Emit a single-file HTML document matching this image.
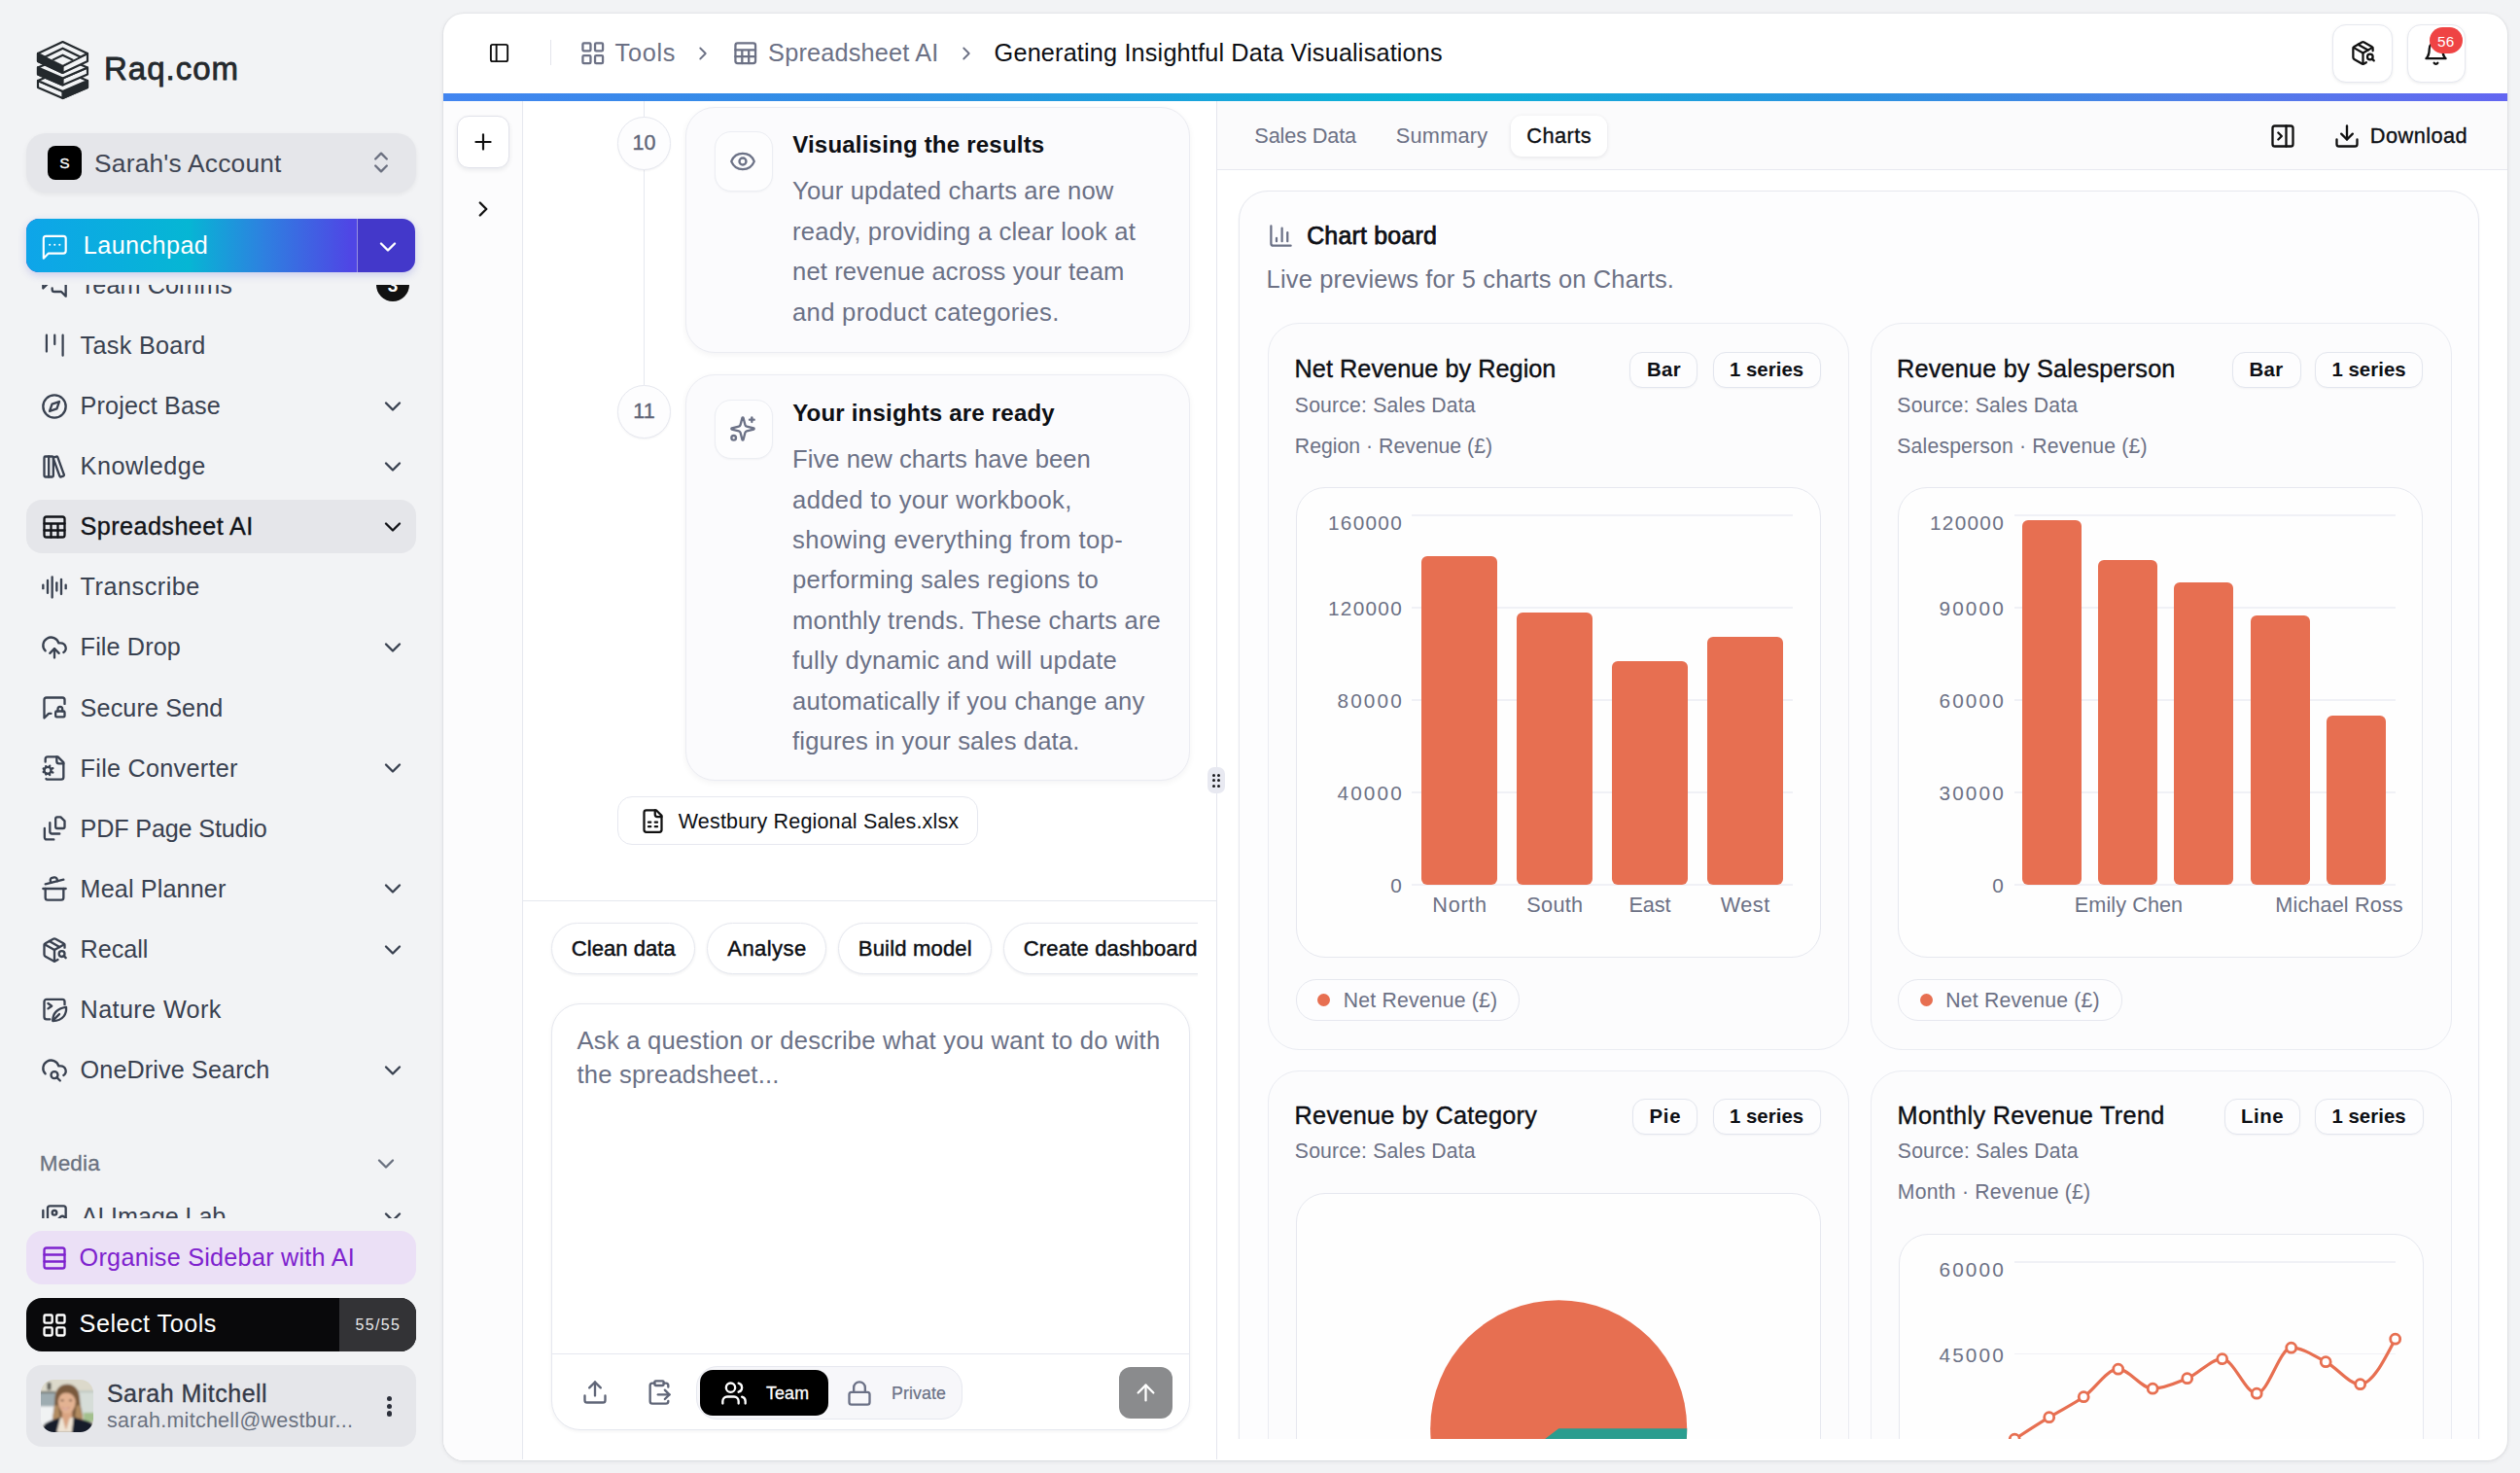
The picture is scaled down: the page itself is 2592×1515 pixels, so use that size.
<!DOCTYPE html>
<html lang="en"><head><meta charset="utf-8"><title>Raq.com - Spreadsheet AI</title>
<style>
*{box-sizing:border-box;margin:0;padding:0}
html,body{width:2592px;height:1515px;overflow:hidden;background:#f2f3f5;}
body{font-family:"Liberation Sans",sans-serif;position:relative;-webkit-font-smoothing:antialiased;}
div,span.t,svg.i{position:absolute}
span.t{white-space:nowrap;display:block}
svg.i{overflow:visible}
.clip{overflow:hidden}
</style></head>
<body>
<svg class="i" style="left:38px;top:42px" width="53" height="60" viewBox="0 0 53 60">
<g stroke="#24292d" stroke-width="2.2" stroke-linejoin="round" fill="#f2f3f5">
<path d="M1 48 L26.500 59 L52 48 L52 41 L26.500 52 L1 41 Z"/>
<path d="M26.500 52 L52 41 L52 48 L26.500 59 Z" fill="#24292d"/>
<path d="M1 41 L26.500 30 L52 41 L26.500 52 Z"/>
<path d="M1 34.500 L26.500 45.500 L52 34.500 L52 27.500 L26.500 38.500 L1 27.500 Z"/>
<path d="M1 27.500 L26.500 38.500 L26.500 45.500 L1 34.500 Z" fill="#24292d"/>
<path d="M1 27.500 L26.500 16.500 L52 27.500 L26.500 38.500 Z"/>
<path d="M1 21 L26.500 33 L52 21 L52 13 L26.500 25 L1 13 Z"/>
<path d="M1 13 L26.500 25 L26.500 33 L1 21 Z" fill="#24292d"/>
<path d="M1 13 L26.500 1 L52 13 L26.500 26 Z"/>
<clipPath id="lg"><path d="M2.500 13 L26.500 1.800 L50.500 13 L26.500 25 Z"/></clipPath>
<g clip-path="url(#lg)" stroke="none">
<path d="M4.400 17.200 L26.500 6.400 L48.600 17.200 L26.500 28 Z" fill="#24292d"/>
<path d="M9.500 17.200 L26.500 8.900 L43.500 17.200 L26.500 25.500 Z" fill="#f2f3f5"/>
<path d="M12.600 20.200 L26.500 13.400 L40.400 20.200 L26.500 27 Z" fill="#24292d"/>
<path d="M17.400 20.350 L26.500 15.900 L35.600 20.350 L26.500 24.800 Z" fill="#f2f3f5"/>
</g>
</g></svg>
<span class="t" style="top:50.0px;font-size:33.0px;line-height:42.9px;color:#24292d;-webkit-text-stroke:0.8px #24292d;left:106.98px;letter-spacing:0.995px;">Raq.com</span>
<div style="left:27px;top:137px;width:401px;height:61px;background:#e5e6ea;border-radius:20px;box-shadow:0 2px 5px rgba(0,0,0,.06)"></div>
<div style="left:49px;top:150px;width:35px;height:35px;background:#000;border-radius:8px"></div>
<span class="t" style="top:158.01px;font-size:15.5px;line-height:20.15px;color:#fff;-webkit-text-stroke:0.3px #fff;left:66.5px;transform:translateX(-50%);">S</span>
<span class="t" style="top:151.01px;font-size:26.32px;line-height:34.22px;color:#3f4553;left:97.05px;letter-spacing:0.216px;">Sarah's Account</span>
<svg class="i" style="left:377.5px;top:153.0px;" width="28" height="28" viewBox="0 0 24 24" fill="none" stroke="#6b7080" stroke-width="2" stroke-linecap="round" stroke-linejoin="round"><path d="m7 15 5 5 5-5"/><path d="m7 9 5-5 5 5"/></svg>
<div style="left:27px;top:225px;width:400.2px;height:55px;border-radius:13px;background:#4338ca;box-shadow:0 3px 8px rgba(60,70,200,.22);overflow:hidden"><div style="left:0;top:0;width:340px;height:55px;background:linear-gradient(90deg,#0ea5e9 0%,#06b6d4 49%,#2e80e0 72%,#4f46e5 98%)"></div><div style="left:339.500px;top:0;width:1.500px;height:55px;background:rgba(255,255,255,.45)"></div></div>
<svg class="i" style="left:40.55px;top:239.05px;" width="30.5" height="30.5" viewBox="0 0 24 24" fill="none" stroke="#fff" stroke-width="1.7" stroke-linecap="round" stroke-linejoin="round"><path d="M21 15a2 2 0 0 1-2 2H7l-4 4V5a2 2 0 0 1 2-2h14a2 2 0 0 1 2 2z"/><path d="M8 10h.01"/><path d="M12 10h.01"/><path d="M16 10h.01"/></svg>
<span class="t" style="top:236.01px;font-size:25.21px;line-height:32.77px;color:#fff;left:85.81px;letter-spacing:0.414px;">Launchpad</span>
<svg class="i" style="left:385.2px;top:239.5px;" width="28" height="28" viewBox="0 0 24 24" fill="none" stroke="#fff" stroke-width="2" stroke-linecap="round" stroke-linejoin="round"><path d="m6 9 6 6 6-6"/></svg>
<div class="clip" style="left:0;top:293.300px;width:456px;height:959.700px">
<svg class="i" style="left:42.4px;top:-14.0px;" width="28" height="28" viewBox="0 0 24 24" fill="none" stroke="#394150" stroke-width="2" stroke-linecap="round" stroke-linejoin="round"><path d="M14 9a2 2 0 0 1-2 2H6l-4 4V4a2 2 0 0 1 2-2h8a2 2 0 0 1 2 2z"/><path d="M18 9h2a2 2 0 0 1 2 2v11l-4-4h-6a2 2 0 0 1-2-2v-1"/></svg>
<span class="t" style="top:-16.3px;font-size:25.21px;line-height:32.77px;color:#394150;left:82.61px;letter-spacing:0.089px;">Team Comms</span>
<div style="left:387px;top:-17.3px;width:34px;height:34px;background:#111;border-radius:50%"></div>
<span class="t" style="top:-11.31px;font-size:19.0px;line-height:24.7px;color:#fff;font-weight:700;left:404px;transform:translateX(-50%);">3</span>
<svg class="i" style="left:42px;top:48.02px" width="28" height="28" viewBox="0 0 28 28" fill="none" stroke="#394150" stroke-width="2.250" stroke-linecap="round"><path d="M5.900 3.700V20.600M14.250 3.700V13M22.600 3.700V24.700"/></svg>
<span class="t" style="top:45.71px;font-size:25.21px;line-height:32.77px;color:#394150;left:82.61px;letter-spacing:0.297px;">Task Board</span>
<svg class="i" style="left:42.4px;top:110.24px;" width="28" height="28" viewBox="0 0 24 24" fill="none" stroke="#394150" stroke-width="2" stroke-linecap="round" stroke-linejoin="round"><circle cx="12" cy="12" r="10"/><polygon points="16.24 7.76 14.12 14.12 7.76 16.24 9.88 9.88 16.24 7.76"/></svg>
<span class="t" style="top:107.71px;font-size:25.21px;line-height:32.77px;color:#394150;left:82.61px;letter-spacing:0.122px;">Project Base</span>
<svg class="i" style="left:390.3px;top:110.24px;" width="28" height="28" viewBox="0 0 24 24" fill="none" stroke="#394150" stroke-width="2" stroke-linecap="round" stroke-linejoin="round"><path d="m6 9 6 6 6-6"/></svg>
<svg class="i" style="left:42.4px;top:172.36px;" width="28" height="28" viewBox="0 0 24 24" fill="none" stroke="#394150" stroke-width="2" stroke-linecap="round" stroke-linejoin="round"><rect width="8" height="18" x="3" y="3" rx="1"/><path d="M7 3v18"/><path d="M20.4 18.9c.2.5-.1 1.1-.6 1.3l-1.9.7c-.5.2-1.1-.1-1.3-.6L11.1 5.1c-.2-.5.1-1.1.6-1.3l1.9-.7c.5-.2 1.1.1 1.3.6Z"/></svg>
<span class="t" style="top:169.71px;font-size:25.21px;line-height:32.77px;color:#394150;left:82.61px;letter-spacing:0.503px;">Knowledge</span>
<svg class="i" style="left:390.3px;top:172.36px;" width="28" height="28" viewBox="0 0 24 24" fill="none" stroke="#394150" stroke-width="2" stroke-linecap="round" stroke-linejoin="round"><path d="m6 9 6 6 6-6"/></svg>
<div style="left:27px;top:220.7px;width:401px;height:55px;background:#e5e6ea;border-radius:16px"></div>
<svg class="i" style="left:42.4px;top:234.48px;" width="28" height="28" viewBox="0 0 24 24" fill="none" stroke="#111318" stroke-width="2" stroke-linecap="round" stroke-linejoin="round"><rect width="18" height="18" x="3" y="3" rx="2"/><path d="M3 9h18M3 15h18M9 9v12M15 9v12"/></svg>
<span class="t" style="top:231.71px;font-size:25.21px;line-height:32.77px;color:#111318;-webkit-text-stroke:0.35px #111318;left:82.61px;letter-spacing:0.414px;">Spreadsheet AI</span>
<svg class="i" style="left:390.3px;top:234.48px;" width="28" height="28" viewBox="0 0 24 24" fill="none" stroke="#111318" stroke-width="2" stroke-linecap="round" stroke-linejoin="round"><path d="m6 9 6 6 6-6"/></svg>
<svg class="i" style="left:42.4px;top:296.6px;" width="28" height="28" viewBox="0 0 24 24" fill="none" stroke="#394150" stroke-width="2" stroke-linecap="round" stroke-linejoin="round"><path d="M2 10v3"/><path d="M6 6v11"/><path d="M10 3v18"/><path d="M14 8v7"/><path d="M18 5v13"/><path d="M22 10v3"/></svg>
<span class="t" style="top:293.71px;font-size:25.21px;line-height:32.77px;color:#394150;left:82.61px;letter-spacing:0.514px;">Transcribe</span>
<svg class="i" style="left:42.4px;top:358.72px;" width="28" height="28" viewBox="0 0 24 24" fill="none" stroke="#394150" stroke-width="2" stroke-linecap="round" stroke-linejoin="round"><path d="M12 13v8"/><path d="M4 14.899A7 7 0 1 1 15.71 8h1.79a4.5 4.5 0 0 1 2.5 8.242"/><path d="m8 17 4-4 4 4"/></svg>
<span class="t" style="top:355.71px;font-size:25.21px;line-height:32.77px;color:#394150;left:82.61px;letter-spacing:0.126px;">File Drop</span>
<svg class="i" style="left:390.3px;top:358.72px;" width="28" height="28" viewBox="0 0 24 24" fill="none" stroke="#394150" stroke-width="2" stroke-linecap="round" stroke-linejoin="round"><path d="m6 9 6 6 6-6"/></svg>
<svg class="i" style="left:42.4px;top:420.84px;" width="28" height="28" viewBox="0 0 24 24" fill="none" stroke="#394150" stroke-width="2" stroke-linecap="round" stroke-linejoin="round"><path d="M19 15v-2a2 2 0 1 0-4 0v2"/><path d="M9 17H7l-4 4V5a2 2 0 0 1 2-2h14a2 2 0 0 1 2 2v3.5"/><rect x="13" y="15" width="8" height="5" rx="1"/></svg>
<span class="t" style="top:418.71px;font-size:25.21px;line-height:32.77px;color:#394150;left:82.61px;letter-spacing:0.102px;">Secure Send</span>
<svg class="i" style="left:42.4px;top:482.96px;" width="28" height="28" viewBox="0 0 24 24" fill="none" stroke="#394150" stroke-width="2" stroke-linecap="round" stroke-linejoin="round"><path d="M14 2v4a2 2 0 0 0 2 2h4"/><path d="m3.2 12.9-.9-.4"/><path d="m3.2 15.1-.9.4"/><path d="M4.677 21.5a2 2 0 0 0 1.313.5H18a2 2 0 0 0 2-2V7l-5-5H6a2 2 0 0 0-2 2v2.5"/><path d="m4.9 11.3-.4-.9"/><path d="m4.9 16.7-.4.9"/><path d="m7.5 10.9.4-.9"/><path d="m7.5 17.1.4.9"/><path d="m9.7 12.5.9-.4"/><path d="m9.7 15.5.9.4"/><circle cx="6" cy="14" r="3"/></svg>
<span class="t" style="top:480.72px;font-size:25.21px;line-height:32.77px;color:#394150;left:82.61px;letter-spacing:0.267px;">File Converter</span>
<svg class="i" style="left:390.3px;top:482.96px;" width="28" height="28" viewBox="0 0 24 24" fill="none" stroke="#394150" stroke-width="2" stroke-linecap="round" stroke-linejoin="round"><path d="m6 9 6 6 6-6"/></svg>
<svg class="i" style="left:42.4px;top:545.08px;" width="28" height="28" viewBox="0 0 24 24" fill="none" stroke="#394150" stroke-width="2" stroke-linecap="round" stroke-linejoin="round"><path d="M13 3.500a1.500 1.500 0 0 1 1.500-1.500h3l3.500 3.500v5a1.500 1.500 0 0 1-1.500 1.500h-5a1.500 1.500 0 0 1-1.500-1.500z"/><path d="M8 7v8a1.700 1.700 0 0 0 1.700 1.700h6.800"/><path d="M3.300 12v8a1.800 1.800 0 0 0 1.800 1.800h6.300"/></svg>
<span class="t" style="top:542.73px;font-size:25.21px;line-height:32.77px;color:#394150;left:82.61px;letter-spacing:-0.179px;">PDF Page Studio</span>
<svg class="i" style="left:42.4px;top:607.2px;" width="28" height="28" viewBox="0 0 24 24" fill="none" stroke="#394150" stroke-width="2" stroke-linecap="round" stroke-linejoin="round"><path d="M2 12h20"/><path d="M20 12v8a2 2 0 0 1-2 2H6a2 2 0 0 1-2-2v-8"/><path d="m4 8 16-4"/><path d="m8.86 6.78-.45-1.81a2 2 0 0 1 1.45-2.43l1.94-.48a2 2 0 0 1 2.43 1.46l.45 1.8"/></svg>
<span class="t" style="top:604.71px;font-size:25.21px;line-height:32.77px;color:#394150;left:82.61px;letter-spacing:0.112px;">Meal Planner</span>
<svg class="i" style="left:390.3px;top:607.2px;" width="28" height="28" viewBox="0 0 24 24" fill="none" stroke="#394150" stroke-width="2" stroke-linecap="round" stroke-linejoin="round"><path d="m6 9 6 6 6-6"/></svg>
<svg class="i" style="left:42.4px;top:669.32px;" width="28" height="28" viewBox="0 0 24 24" fill="none" stroke="#394150" stroke-width="2" stroke-linecap="round" stroke-linejoin="round"><path d="M21 10V8a2 2 0 0 0-1-1.73l-7-4a2 2 0 0 0-2 0l-7 4A2 2 0 0 0 3 8v8a2 2 0 0 0 1 1.73l7 4a2 2 0 0 0 2 0l2-1.14"/><path d="m7.5 4.27 9 5.15"/><polyline points="3.29 7 12 12 20.71 7"/><line x1="12" x2="12" y1="22" y2="12"/><circle cx="18.5" cy="15.5" r="2.5"/><path d="M20.27 17.27 22 19"/></svg>
<span class="t" style="top:666.72px;font-size:25.21px;line-height:32.77px;color:#394150;left:82.61px;letter-spacing:-0.058px;">Recall</span>
<svg class="i" style="left:390.3px;top:669.32px;" width="28" height="28" viewBox="0 0 24 24" fill="none" stroke="#394150" stroke-width="2" stroke-linecap="round" stroke-linejoin="round"><path d="m6 9 6 6 6-6"/></svg>
<svg class="i" style="left:42.4px;top:731.44px;" width="28" height="28" viewBox="0 0 24 24" fill="none" stroke="#394150" stroke-width="2" stroke-linecap="round" stroke-linejoin="round"><path d="M21 7V4.500a2 2 0 0 0-2-2H5a2 2 0 0 0-2 2V18a2 2 0 0 0 2 2h3"/><path d="m6.400 6 3.200 2.300-3.200 2.300"/><path d="M10.500 21.500C10.500 15.500 14 10.500 22.300 9.300 22.800 15 20 21.300 10.500 21.500Z"/><path d="M10.900 20.900 16.300 15.500"/></svg>
<span class="t" style="top:728.71px;font-size:25.21px;line-height:32.77px;color:#394150;left:82.61px;letter-spacing:0.375px;">Nature Work</span>
<svg class="i" style="left:42.4px;top:793.56px;" width="28" height="28" viewBox="0 0 24 24" fill="none" stroke="#394150" stroke-width="2" stroke-linecap="round" stroke-linejoin="round"><path d="M4 14.899A7 7 0 1 1 15.710 8h1.790a4.500 4.500 0 0 1 2.500 8.242"/><circle cx="12" cy="16" r="3"/><path d="m14.100 18.100 2.900 2.900"/></svg>
<span class="t" style="top:790.71px;font-size:25.21px;line-height:32.77px;color:#394150;left:82.61px;letter-spacing:0.102px;">OneDrive Search</span>
<svg class="i" style="left:390.3px;top:793.56px;" width="28" height="28" viewBox="0 0 24 24" fill="none" stroke="#394150" stroke-width="2" stroke-linecap="round" stroke-linejoin="round"><path d="m6 9 6 6 6-6"/></svg>
<span class="t" style="top:888.7px;font-size:22.5px;line-height:29.25px;color:#6b7280;-webkit-text-stroke:0.3px #6b7280;left:40.76px;letter-spacing:0.17px;">Media</span>
<svg class="i" style="left:383.0px;top:889.7px;" width="28" height="28" viewBox="0 0 24 24" fill="none" stroke="#6b7280" stroke-width="2" stroke-linecap="round" stroke-linejoin="round"><path d="m6 9 6 6 6-6"/></svg>
<svg class="i" style="left:42.4px;top:944.9px;" width="28" height="28" viewBox="0 0 24 24" fill="none" stroke="#394150" stroke-width="2" stroke-linecap="round" stroke-linejoin="round"><path d="M18 22H4a2 2 0 0 1-2-2V6"/><path d="m22 13-1.296-1.296a2.410 2.410 0 0 0-3.408 0L11 18"/><circle cx="12" cy="8" r="2"/><rect width="16" height="16" x="6" y="2" rx="2"/></svg>
<span class="t" style="top:941.71px;font-size:25.21px;line-height:32.77px;color:#394150;left:83.61px;letter-spacing:-0.107px;">AI Image Lab</span>
<svg class="i" style="left:390.3px;top:944.9px;" width="28" height="28" viewBox="0 0 24 24" fill="none" stroke="#394150" stroke-width="2" stroke-linecap="round" stroke-linejoin="round"><path d="m6 9 6 6 6-6"/></svg>
</div>
<div style="left:27px;top:1266px;width:400.5px;height:55px;background:#ebe0f6;border-radius:16px"></div>
<svg class="i" style="left:41.5px;top:1280.0px;" width="28" height="28" viewBox="0 0 24 24" fill="none" stroke="#7e22ce" stroke-width="2" stroke-linecap="round" stroke-linejoin="round"><rect width="18" height="18" x="3" y="3" rx="2"/><path d="M21 9H3"/><path d="M21 15H3"/></svg>
<span class="t" style="top:1277.01px;font-size:25.21px;line-height:32.77px;color:#7e22ce;left:81.61px;letter-spacing:0.253px;">Organise Sidebar with AI</span>
<div style="left:27px;top:1335px;width:400.5px;height:55px;background:#09090b;border-radius:16px;overflow:hidden"><div style="left:322px;top:0;width:79px;height:55px;background:#333336"></div></div>
<svg class="i" style="left:41.5px;top:1348.5px;" width="28" height="28" viewBox="0 0 24 24" fill="none" stroke="#fff" stroke-width="2" stroke-linecap="round" stroke-linejoin="round"><rect width="7" height="7" x="3" y="3" rx="1"/><rect width="7" height="7" x="14" y="3" rx="1"/><rect width="7" height="7" x="14" y="14" rx="1"/><rect width="7" height="7" x="3" y="14" rx="1"/></svg>
<span class="t" style="top:1345.01px;font-size:25.21px;line-height:32.77px;color:#fff;left:81.61px;letter-spacing:0.483px;">Select Tools</span>
<span class="t" style="top:1353.0px;font-size:16.0px;line-height:20.8px;color:#e8e8ea;left:365.62px;letter-spacing:1.303px;">55/55</span>
<div style="left:27px;top:1404px;width:400.5px;height:83.5px;background:#e5e6ea;border-radius:16px"></div>
<svg class="i" style="left:42px;top:1419px" width="54" height="54" viewBox="0 0 54 54">
<defs><clipPath id="av"><rect width="54" height="54" rx="13.500"/></clipPath>
<filter id="avb" x="-10%" y="-10%" width="120%" height="120%"><feGaussianBlur stdDeviation="1"/></filter></defs>
<g clip-path="url(#av)"><g filter="url(#avb)">
<rect x="-2" y="-2" width="58" height="58" fill="#dcd9cb"/>
<rect x="-2" y="13.800" width="17" height="14" fill="#9eacb1"/>
<rect x="-2" y="12" width="17" height="1.800" fill="#5e6460"/>
<rect x="6.500" y="2.800" width="4" height="8" rx="1.500" fill="#5a5a52"/>
<rect x="-2" y="27.500" width="16" height="20" fill="#f0f2f3"/>
<rect x="38" y="11.500" width="18" height="25" fill="#d6ddd8"/>
<rect x="38" y="11.500" width="18" height="1.600" fill="#b9c2bb"/>
<rect x="44" y="34" width="12" height="9" fill="#a3c08d"/>
<path d="M27.200 4.800C18 4.800 14.500 12 14.300 21 14 30 12 36 12.500 41L43 41C43.500 35 40.500 29 40.200 21 40 12 36 4.800 27.200 4.800Z" fill="#7a5a3c"/>
<path d="M14.300 26C14 32 12 37 12.500 41L20 41 18 27ZM40.200 26C40.500 32 43.500 37 43 41L35 41 36.500 27Z" fill="#b18b60"/>
<rect x="21.700" y="32" width="10.600" height="10" fill="#d9a482"/>
<ellipse cx="26.800" cy="22.800" rx="9" ry="12" fill="#e3b292"/>
<path d="M17.800 21C18 13 22 10.200 27 10.200 32.500 10.200 35.800 13.500 35.800 21 34 16.500 31 13.500 26 13.600 21.500 13.800 19 16.500 17.800 21Z" fill="#7a5a3c"/>
<ellipse cx="22" cy="21.300" rx="1.700" ry="0.900" fill="#5d4434"/><ellipse cx="30.600" cy="21.300" rx="1.700" ry="0.900" fill="#5d4434"/>
<path d="M21.500 28.800Q25.500 32.500 29.500 28.800Q25.500 30 21.500 28.800Z" fill="#fff" stroke="#c4766a" stroke-width="0.600"/>
<path d="M4 45.500C9 42 15 40.500 20 39L27 47 33.700 38.800C40 40.500 47 42 52.800 44.500L56 56-2 56Z" fill="#151b2c"/>
<path d="M20 39 16.200 54.500 32 54.500 33.700 38.800 29.500 39.500 26 50 22.500 39.500Z" fill="#efe4d4"/>
<path d="M22.500 39.500 25.800 52 29.500 39.500Z" fill="#d9a482"/>
</g></g></svg>
<span class="t" style="top:1417.0px;font-size:25.0px;line-height:32.5px;color:#353b49;-webkit-text-stroke:0.35px #353b49;left:109.92px;letter-spacing:0.488px;">Sarah Mitchell</span>
<span class="t" style="top:1448.01px;font-size:21.5px;line-height:27.95px;color:#6b7280;left:110.12px;letter-spacing:0.262px;">sarah.mitchell@westbur...</span>
<div style="left:398.3px;top:1436.1000000000001px;width:5.2px;height:5.2px;background:#2b2f3a;border-radius:50%"></div>
<div style="left:398.3px;top:1443.7px;width:5.2px;height:5.2px;background:#2b2f3a;border-radius:50%"></div>
<div style="left:398.3px;top:1451.4px;width:5.2px;height:5.2px;background:#2b2f3a;border-radius:50%"></div>
<div style="left:456px;top:13.5px;width:2122.7px;height:1488.3px;background:#fff;border-radius:21px;box-shadow:0 1px 4px rgba(15,23,42,.10),0 0 0 1px rgba(15,23,42,.03)"></div>
<svg class="i" style="left:502.0px;top:43.3px;" width="23" height="23" viewBox="0 0 24 24" fill="none" stroke="#111" stroke-width="2" stroke-linecap="round" stroke-linejoin="round"><rect width="18" height="18" x="3" y="3" rx="2"/><path d="M9 3v18"/></svg>
<div style="left:565.5px;top:41px;width:1.5px;height:26px;background:#e3e5ec"></div>
<svg class="i" style="left:595.55px;top:40.55px;" width="27.5" height="27.5" viewBox="0 0 24 24" fill="none" stroke="#6c7185" stroke-width="2" stroke-linecap="round" stroke-linejoin="round"><rect width="7" height="7" x="3" y="3" rx="1"/><rect width="7" height="7" x="14" y="3" rx="1"/><rect width="7" height="7" x="14" y="14" rx="1"/><rect width="7" height="7" x="3" y="14" rx="1"/></svg>
<span class="t" style="top:38.01px;font-size:25.29px;line-height:32.88px;color:#6c7185;left:632.61px;letter-spacing:0.681px;">Tools</span>
<svg class="i" style="left:711.5px;top:43.5px;" width="22" height="22" viewBox="0 0 24 24" fill="none" stroke="#6c7185" stroke-width="2" stroke-linecap="round" stroke-linejoin="round"><path d="m9 18 6-6-6-6"/></svg>
<svg class="i" style="left:753.05px;top:40.55px;" width="27.5" height="27.5" viewBox="0 0 24 24" fill="none" stroke="#6c7185" stroke-width="2" stroke-linecap="round" stroke-linejoin="round"><rect width="18" height="18" x="3" y="3" rx="2"/><path d="M3 9h18M3 15h18M9 9v12M15 9v12"/></svg>
<span class="t" style="top:38.01px;font-size:25.29px;line-height:32.88px;color:#6c7185;left:790.11px;letter-spacing:0.177px;">Spreadsheet AI</span>
<svg class="i" style="left:983.0px;top:43.5px;" width="22" height="22" viewBox="0 0 24 24" fill="none" stroke="#6c7185" stroke-width="2" stroke-linecap="round" stroke-linejoin="round"><path d="m9 18 6-6-6-6"/></svg>
<span class="t" style="top:38.01px;font-size:25.29px;line-height:32.88px;color:#0d0f14;left:1022.61px;letter-spacing:0.155px;">Generating Insightful Data Visualisations</span>
<div style="left:2399px;top:24.7px;width:62px;height:60px;background:#fff;border:1.500px solid #e6e8ef;border-radius:14px;box-shadow:0 1px 3px rgba(15,23,42,.08)"></div>
<svg class="i" style="left:2416.5px;top:41.0px;" width="27" height="27" viewBox="0 0 24 24" fill="none" stroke="#111" stroke-width="2" stroke-linecap="round" stroke-linejoin="round"><path d="M21 10V8a2 2 0 0 0-1-1.73l-7-4a2 2 0 0 0-2 0l-7 4A2 2 0 0 0 3 8v8a2 2 0 0 0 1 1.73l7 4a2 2 0 0 0 2 0l2-1.14"/><path d="m7.5 4.27 9 5.15"/><polyline points="3.29 7 12 12 20.71 7"/><line x1="12" x2="12" y1="22" y2="12"/><circle cx="18.5" cy="15.5" r="2.5"/><path d="M20.27 17.27 22 19"/></svg>
<div style="left:2476px;top:24.7px;width:60px;height:60px;background:#fff;border:1.500px solid #e6e8ef;border-radius:14px;box-shadow:0 1px 3px rgba(15,23,42,.08)"></div>
<svg class="i" style="left:2491.5px;top:41.0px;" width="27" height="27" viewBox="0 0 24 24" fill="none" stroke="#111" stroke-width="2" stroke-linecap="round" stroke-linejoin="round"><path d="M6 8a6 6 0 0 1 12 0c0 7 3 9 3 9H3s3-2 3-9"/><path d="M10.3 21a1.94 1.94 0 0 0 3.4 0"/></svg>
<div style="left:2499px;top:28.3px;width:33.5px;height:27px;background:#ef4444;border-radius:14px"></div>
<span class="t" style="top:33.01px;font-size:15.3px;line-height:19.89px;color:#fff;left:2515.8px;transform:translateX(-50%);letter-spacing:.3px;">56</span>
<div style="left:456px;top:96px;width:2122.7px;height:7.5px;background:linear-gradient(90deg,#4285f0 0%,#2d8fe3 22%,#0ab3d6 47%,#2a92e0 68%,#4f7fe8 85%,#6366f1 100%)"></div>
<div style="left:456px;top:103.5px;width:81px;height:1398.3px;background:#fcfcfd;border-bottom-left-radius:21px"></div>
<div style="left:536.5px;top:103.5px;width:1.5px;height:1397.5px;background:#e6e8ef"></div>
<div style="left:470px;top:119px;width:54px;height:54px;background:#fff;border:1.500px solid #e1e2ea;border-radius:12px;box-shadow:0 2px 5px rgba(15,23,42,.08)"></div>
<svg class="i" style="left:484.0px;top:133.0px;" width="26" height="26" viewBox="0 0 24 24" fill="none" stroke="#111" stroke-width="2" stroke-linecap="round" stroke-linejoin="round"><path d="M5 12h14"/><path d="M12 5v14"/></svg>
<svg class="i" style="left:483.5px;top:202.0px;" width="26" height="26" viewBox="0 0 24 24" fill="none" stroke="#111" stroke-width="2.2" stroke-linecap="round" stroke-linejoin="round"><path d="m9 18 6-6-6-6"/></svg>
<div style="left:661.8px;top:103.5px;width:1.5px;height:17px;background:#e6e8ef"></div>
<div style="left:661.8px;top:174px;width:1.5px;height:222px;background:#e6e8ef"></div>
<div style="left:635px;top:119.5px;width:55px;height:55px;background:#fdfdfe;border:1.500px solid #e6e8ef;border-radius:50%;box-shadow:0 1px 2px rgba(15,23,42,.05)"></div>
<span class="t" style="top:134.01px;font-size:21.5px;line-height:27.95px;color:#5f6577;-webkit-text-stroke:0.4px #5f6577;left:662.5px;transform:translateX(-50%);">10</span>
<div style="left:635px;top:395.5px;width:55px;height:55px;background:#fdfdfe;border:1.500px solid #e6e8ef;border-radius:50%;box-shadow:0 1px 2px rgba(15,23,42,.05)"></div>
<span class="t" style="top:410.01px;font-size:21.5px;line-height:27.95px;color:#5f6577;-webkit-text-stroke:0.4px #5f6577;left:662.5px;transform:translateX(-50%);">11</span>
<div style="left:705px;top:110px;width:518.5px;height:253px;background:#fbfbfd;border:1.500px solid #ebecf2;border-radius:30px;box-shadow:0 2px 6px rgba(15,23,42,.05)"></div>
<div style="left:734.5px;top:135px;width:60.5px;height:61.5px;background:#fdfdfe;border:1.500px solid #eceef3;border-radius:17px;box-shadow:0 1px 2px rgba(15,23,42,.04)"></div>
<svg class="i" style="left:750.3px;top:152.0px;" width="28" height="28" viewBox="0 0 24 24" fill="none" stroke="#6b7186" stroke-width="2" stroke-linecap="round" stroke-linejoin="round"><path d="M2.062 12.348a1 1 0 0 1 0-.696 10.750 10.750 0 0 1 19.876 0 1 1 0 0 1 0 .696 10.750 10.750 0 0 1-19.876 0"/><circle cx="12" cy="12" r="3"/></svg>
<span class="t" style="top:133.01px;font-size:24.07px;line-height:31.29px;color:#0d0f14;font-weight:700;left:815.18px;letter-spacing:0.185px;">Visualising the results</span>
<span class="t" style="top:180.02px;font-size:25.63px;line-height:33.32px;color:#6b7186;left:815.09px;letter-spacing:0.136px;">Your updated charts are now</span>
<span class="t" style="top:222.01px;font-size:25.63px;line-height:33.32px;color:#6b7186;left:815.09px;letter-spacing:0.183px;">ready, providing a clear look at</span>
<span class="t" style="top:263.01px;font-size:25.63px;line-height:33.32px;color:#6b7186;left:815.09px;letter-spacing:0.083px;">net revenue across your team</span>
<span class="t" style="top:305.0px;font-size:25.63px;line-height:33.32px;color:#6b7186;left:815.09px;letter-spacing:0.293px;">and product categories.</span>
<div style="left:705px;top:384.8px;width:518.5px;height:418.7px;background:#fbfbfd;border:1.500px solid #ebecf2;border-radius:30px;box-shadow:0 2px 6px rgba(15,23,42,.05)"></div>
<div style="left:734.5px;top:410.5px;width:60.5px;height:61.5px;background:#fdfdfe;border:1.500px solid #eceef3;border-radius:17px;box-shadow:0 1px 2px rgba(15,23,42,.04)"></div>
<svg class="i" style="left:750.3px;top:427.2px;" width="28" height="28" viewBox="0 0 24 24" fill="none" stroke="#6b7186" stroke-width="2" stroke-linecap="round" stroke-linejoin="round"><path d="M9.937 15.500A2 2 0 0 0 8.500 14.063l-6.135-1.582a.5.5 0 0 1 0-.962L8.500 9.936A2 2 0 0 0 9.937 8.500l1.582-6.135a.5.5 0 0 1 .963 0L14.063 8.500A2 2 0 0 0 15.500 9.937l6.135 1.581a.5.5 0 0 1 0 .964L15.500 14.063a2 2 0 0 0-1.437 1.437l-1.582 6.135a.5.5 0 0 1-.963 0z"/><path d="M20 2v4"/><path d="M22 4h-4"/><circle cx="4" cy="20" r="2"/></svg>
<span class="t" style="top:409.0px;font-size:24.07px;line-height:31.29px;color:#0d0f14;font-weight:700;left:815.18px;letter-spacing:0.176px;">Your insights are ready</span>
<span class="t" style="top:456.0px;font-size:25.63px;line-height:33.32px;color:#6b7186;left:815.09px;letter-spacing:0.021px;">Five new charts have been</span>
<span class="t" style="top:498.0px;font-size:25.63px;line-height:33.32px;color:#6b7186;left:815.09px;letter-spacing:0.301px;">added to your workbook,</span>
<span class="t" style="top:539.0px;font-size:25.63px;line-height:33.32px;color:#6b7186;left:815.09px;letter-spacing:0.397px;">showing everything from top-</span>
<span class="t" style="top:580.0px;font-size:25.63px;line-height:33.32px;color:#6b7186;left:815.09px;letter-spacing:0.218px;">performing sales regions to</span>
<span class="t" style="top:622.0px;font-size:25.63px;line-height:33.32px;color:#6b7186;left:815.09px;letter-spacing:0.149px;">monthly trends. These charts are</span>
<span class="t" style="top:663.01px;font-size:25.63px;line-height:33.32px;color:#6b7186;left:815.09px;letter-spacing:0.27px;">fully dynamic and will update</span>
<span class="t" style="top:705.01px;font-size:25.63px;line-height:33.32px;color:#6b7186;left:815.09px;letter-spacing:0.157px;">automatically if you change any</span>
<span class="t" style="top:746.01px;font-size:25.63px;line-height:33.32px;color:#6b7186;left:815.09px;letter-spacing:0.125px;">figures in your sales data.</span>
<div style="left:635px;top:819px;width:371px;height:50px;background:#fff;border:1.500px solid #e6e8ef;border-radius:15px"></div>
<svg class="i" style="left:657.5px;top:831.0px;" width="27" height="27" viewBox="0 0 24 24" fill="none" stroke="#111" stroke-width="2" stroke-linecap="round" stroke-linejoin="round"><path d="M15 2H6a2 2 0 0 0-2 2v16a2 2 0 0 0 2 2h12a2 2 0 0 0 2-2V7Z"/><path d="M14 2v4a2 2 0 0 0 2 2h4"/><path d="M8 13h2"/><path d="M14 13h2"/><path d="M8 17h2"/><path d="M14 17h2"/></svg>
<span class="t" style="top:832.0px;font-size:21.51px;line-height:27.96px;color:#0d0f14;left:697.82px;letter-spacing:0.158px;">Westbury Regional Sales.xlsx</span>
<div style="left:537.5px;top:925.5px;width:713.5px;height:1.5px;background:#e6e8ef"></div>
<div class="clip" style="left:537.500px;top:940px;width:694.500px;height:75px">
<div style="left:29.0px;top:9px;width:148.5px;height:53px;background:#fff;border:1.500px solid #e6e8ef;border-radius:27px;box-shadow:0 1px 3px rgba(15,23,42,.07)"></div>
<span class="t" style="top:22.01px;font-size:22.03px;line-height:28.64px;color:#0d0f14;-webkit-text-stroke:0.45px #0d0f14;left:50.29px;letter-spacing:0.04px;">Clean data</span>
<div style="left:189.5px;top:9px;width:123px;height:53px;background:#fff;border:1.500px solid #e6e8ef;border-radius:27px;box-shadow:0 1px 3px rgba(15,23,42,.07)"></div>
<span class="t" style="top:22.01px;font-size:22.03px;line-height:28.64px;color:#0d0f14;-webkit-text-stroke:0.45px #0d0f14;left:210.79px;letter-spacing:0.423px;">Analyse</span>
<div style="left:324.5px;top:9px;width:158px;height:53px;background:#fff;border:1.500px solid #e6e8ef;border-radius:27px;box-shadow:0 1px 3px rgba(15,23,42,.07)"></div>
<span class="t" style="top:22.01px;font-size:22.03px;line-height:28.64px;color:#0d0f14;-webkit-text-stroke:0.45px #0d0f14;left:345.29px;letter-spacing:0.181px;">Build model</span>
<div style="left:494.0px;top:9px;width:228.5px;height:53px;background:#fff;border:1.500px solid #e6e8ef;border-radius:27px;box-shadow:0 1px 3px rgba(15,23,42,.07)"></div>
<span class="t" style="top:22.01px;font-size:22.03px;line-height:28.64px;color:#0d0f14;-webkit-text-stroke:0.45px #0d0f14;left:515.29px;letter-spacing:0.171px;">Create dashboard</span>
</div>
<div style="left:566.5px;top:1031.5px;width:657px;height:439.5px;background:#fff;border:1.500px solid #e6e8ef;border-radius:30px;box-shadow:0 1px 4px rgba(15,23,42,.06)"></div>
<span class="t" style="top:1054.01px;font-size:25.64px;line-height:33.33px;color:#6b7186;left:593.59px;letter-spacing:0.198px;">Ask a question or describe what you want to do with</span>
<span class="t" style="top:1089.01px;font-size:25.64px;line-height:33.33px;color:#6b7186;left:593.59px;letter-spacing:0.152px;">the spreadsheet...</span>
<div style="left:567.5px;top:1391.8px;width:655px;height:1.5px;background:#e6e8ef"></div>
<svg class="i" style="left:598.0px;top:1418.0px;" width="28" height="28" viewBox="0 0 24 24" fill="none" stroke="#5f6577" stroke-width="2" stroke-linecap="round" stroke-linejoin="round"><path d="M21 15v4a2 2 0 0 1-2 2H5a2 2 0 0 1-2-2v-4"/><polyline points="17 8 12 3 7 8"/><line x1="12" x2="12" y1="3" y2="15"/></svg>
<svg class="i" style="left:664.2px;top:1418.3px;" width="28" height="28" viewBox="0 0 24 24" fill="none" stroke="#5f6577" stroke-width="2" stroke-linecap="round" stroke-linejoin="round"><path d="M11 14h10"/><path d="M16 4h2a2 2 0 0 1 2 2v1.344"/><path d="m17 18 4-4-4-4"/><path d="M20 19.656V20a2 2 0 0 1-2 2H6a2 2 0 0 1-2-2V6a2 2 0 0 1 2-2h2"/><rect x="8" y="2" width="8" height="4" rx="1"/></svg>
<div style="left:716px;top:1405px;width:274px;height:55px;background:#f7f7fa;border:1.500px solid #e6e8ef;border-radius:22px"></div>
<div style="left:720px;top:1409px;width:132px;height:47px;background:#000;border-radius:13px"></div>
<svg class="i" style="left:740.5px;top:1418.5px;" width="28" height="28" viewBox="0 0 24 24" fill="none" stroke="#fff" stroke-width="2" stroke-linecap="round" stroke-linejoin="round"><path d="M16 21v-2a4 4 0 0 0-4-4H6a4 4 0 0 0-4 4v2"/><circle cx="9" cy="7" r="4"/><path d="M22 21v-2a4 4 0 0 0-3-3.870"/><path d="M16 3.130a4 4 0 0 1 0 7.750"/></svg>
<span class="t" style="top:1422.01px;font-size:17.8px;line-height:23.14px;color:#fff;-webkit-text-stroke:0.3px #fff;left:788.02px;letter-spacing:0.158px;">Team</span>
<svg class="i" style="left:869.5px;top:1418.8px;" width="28" height="28" viewBox="0 0 24 24" fill="none" stroke="#6b7186" stroke-width="2" stroke-linecap="round" stroke-linejoin="round"><rect width="18" height="11" x="3" y="11" rx="2" ry="2"/><path d="M7 11V7a5 5 0 0 1 10 0v4"/></svg>
<span class="t" style="top:1422.01px;font-size:17.8px;line-height:23.14px;color:#6b7186;-webkit-text-stroke:0.2px #6b7186;left:917.02px;letter-spacing:0.102px;">Private</span>
<div style="left:1151px;top:1406px;width:55px;height:53px;background:#8a8b8d;border-radius:12px"></div>
<svg class="i" style="left:1165.0px;top:1419.0px;" width="27" height="27" viewBox="0 0 24 24" fill="none" stroke="#fff" stroke-width="2" stroke-linecap="round" stroke-linejoin="round"><path d="m5 12 7-7 7 7"/><path d="M12 19V5"/></svg>
<div style="left:1250.8px;top:103.5px;width:1.3px;height:1397.5px;background:#e4e6ee"></div>
<div style="left:1242px;top:789px;width:18px;height:27px;background:#e8e9f1;border-radius:7px"></div>
<div style="left:1246.7px;top:795.5px;width:3px;height:3px;background:#17181c;border-radius:50%"></div>
<div style="left:1246.7px;top:801.0px;width:3px;height:3px;background:#17181c;border-radius:50%"></div>
<div style="left:1246.7px;top:806.5px;width:3px;height:3px;background:#17181c;border-radius:50%"></div>
<div style="left:1252.1px;top:795.5px;width:3px;height:3px;background:#17181c;border-radius:50%"></div>
<div style="left:1252.1px;top:801.0px;width:3px;height:3px;background:#17181c;border-radius:50%"></div>
<div style="left:1252.1px;top:806.5px;width:3px;height:3px;background:#17181c;border-radius:50%"></div>
<div style="left:1251.8px;top:103.5px;width:1326.8999999999999px;height:70.2px;background:#fbfbfc"></div>
<div style="left:1251.8px;top:173.7px;width:1326.8999999999999px;height:1.3px;background:#e7e9f0"></div>
<span class="t" style="top:126.01px;font-size:21.75px;line-height:28.28px;color:#6c7185;left:1290.3px;letter-spacing:-0.166px;">Sales Data</span>
<span class="t" style="top:126.01px;font-size:21.75px;line-height:28.28px;color:#6c7185;left:1435.8px;letter-spacing:0.225px;">Summary</span>
<div style="left:1554px;top:119px;width:99px;height:42px;background:#fff;border-radius:11px;box-shadow:0 1px 4px rgba(15,23,42,.10)"></div>
<span class="t" style="top:126.01px;font-size:21.75px;line-height:28.28px;color:#0d0f14;-webkit-text-stroke:0.35px #0d0f14;left:1570.3px;letter-spacing:0.468px;">Charts</span>
<svg class="i" style="left:2334.0px;top:126.0px;" width="28" height="28" viewBox="0 0 24 24" fill="none" stroke="#111" stroke-width="2" stroke-linecap="round" stroke-linejoin="round"><rect width="18" height="18" x="3" y="3" rx="2"/><path d="M15 3v18"/><path d="m8 9 3 3-3 3"/></svg>
<svg class="i" style="left:2400.0px;top:126.0px;" width="28" height="28" viewBox="0 0 24 24" fill="none" stroke="#111" stroke-width="2" stroke-linecap="round" stroke-linejoin="round"><path d="M21 15v4a2 2 0 0 1-2 2H5a2 2 0 0 1-2-2v-4"/><polyline points="7 10 12 15 17 10"/><line x1="12" x2="12" y1="15" y2="3"/></svg>
<span class="t" style="top:126.01px;font-size:21.75px;line-height:28.28px;color:#0d0f14;-webkit-text-stroke:0.35px #0d0f14;left:2437.8px;letter-spacing:0.454px;">Download</span>
<div class="clip" style="left:1251.8px;top:174.8px;width:1326.2px;height:1305.7px">
<div style="left:22.4px;top:21.7px;width:1276.2px;height:1400px;background:#fdfdfe;border:1.500px solid #e6e8ef;border-radius:30px;box-shadow:0 1px 3px rgba(15,23,42,.04)"></div>
<svg class="i" style="left:52.2px;top:54.7px;" width="27" height="27" viewBox="0 0 24 24" fill="none" stroke="#6b7186" stroke-width="2" stroke-linecap="round" stroke-linejoin="round"><path d="M3 3v16a2 2 0 0 0 2 2h16"/><path d="M18 17V9"/><path d="M13 17V5"/><path d="M8 17v-3"/></svg>
<span class="t" style="top:51.22px;font-size:24.93px;line-height:32.41px;color:#0d0f14;-webkit-text-stroke:0.75px #0d0f14;left:92.33px;letter-spacing:0.211px;">Chart board</span>
<span class="t" style="top:96.22px;font-size:25.44px;line-height:33.07px;color:#6c7185;left:50.8px;letter-spacing:0.179px;">Live previews for 5 charts on Charts.</span>
<div style="left:52.2px;top:157.5px;width:598px;height:747.5px;background:#fcfcfd;border:1.500px solid #eaecf2;border-radius:32px"></div>
<span class="t" style="top:188.22px;font-size:25.25px;line-height:32.83px;color:#0d0f14;-webkit-text-stroke:0.4px #0d0f14;left:79.81px;letter-spacing:0.036px;">Net Revenue by Region</span>
<div style="left:424.7px;top:187.7px;width:69.5px;height:36.5px;background:#fdfdfe;border:1.500px solid #e3e6ee;border-radius:13px;box-shadow:0 1px 2px rgba(15,23,42,.04)"></div>
<span class="t" style="top:192.22px;font-size:20.36px;line-height:26.47px;color:#0d0f14;font-weight:700;left:442.08px;letter-spacing:0.392px;">Bar</span>
<div style="left:510.2px;top:187.7px;width:111.5px;height:36.5px;background:#fdfdfe;border:1.500px solid #e3e6ee;border-radius:13px;box-shadow:0 1px 2px rgba(15,23,42,.04)"></div>
<span class="t" style="top:192.22px;font-size:20.36px;line-height:26.47px;color:#0d0f14;font-weight:700;left:527.08px;letter-spacing:0.055px;">1 series</span>
<span class="t" style="top:228.22px;font-size:21.21px;line-height:27.57px;color:#6c7185;left:80.03px;letter-spacing:0.182px;">Source: Sales Data</span>
<span class="t" style="top:270.21px;font-size:21.21px;line-height:27.57px;color:#6c7185;left:80.03px;letter-spacing:0.029px;">Region · Revenue (£)</span>
<div style="left:81.2px;top:326.2px;width:540.5px;height:484px;background:#fefefe;border:1.500px solid #e6e8ef;border-radius:30px"></div>
<div style="left:200.2px;top:354.45px;width:392px;height:1.5px;background:#f0f1f6"></div>
<div style="left:200.2px;top:449.45px;width:392px;height:1.5px;background:#f0f1f6"></div>
<div style="left:200.2px;top:544.45px;width:392px;height:1.5px;background:#f0f1f6"></div>
<div style="left:200.2px;top:639.45px;width:392px;height:1.5px;background:#f0f1f6"></div>
<div style="left:200.2px;top:734.45px;width:392px;height:1.5px;background:#f0f1f6"></div>
<span class="t" style="top:349.21px;font-size:20.8px;line-height:27.04px;color:#6c7185;left:190.0px;transform:translateX(-100%);letter-spacing:1.276px;margin-left:1.276px;">160000</span>
<span class="t" style="top:437.21px;font-size:20.8px;line-height:27.04px;color:#6c7185;left:190.0px;transform:translateX(-100%);letter-spacing:1.276px;margin-left:1.276px;">120000</span>
<span class="t" style="top:532.21px;font-size:20.8px;line-height:27.04px;color:#6c7185;left:190.0px;transform:translateX(-100%);letter-spacing:2.111px;margin-left:2.111px;">80000</span>
<span class="t" style="top:627.21px;font-size:20.8px;line-height:27.04px;color:#6c7185;left:190.0px;transform:translateX(-100%);letter-spacing:2.111px;margin-left:2.111px;">40000</span>
<span class="t" style="top:722.21px;font-size:20.8px;line-height:27.04px;color:#6c7185;left:190.0px;transform:translateX(-100%);">0</span>
<div style="left:210.7px;top:397.2px;width:77.5px;height:338px;background:#e76f51;border-radius:6px"></div>
<span class="t" style="top:742.21px;font-size:21.66px;line-height:28.16px;color:#6c7185;left:249.45px;transform:translateX(-50%);letter-spacing:0.728px;margin-left:0.36px;">North</span>
<div style="left:308.7px;top:455.2px;width:77.5px;height:280px;background:#e76f51;border-radius:6px"></div>
<span class="t" style="top:742.21px;font-size:21.66px;line-height:28.16px;color:#6c7185;left:347.45px;transform:translateX(-50%);letter-spacing:0.318px;margin-left:0.16px;">South</span>
<div style="left:406.2px;top:505.7px;width:78px;height:229.5px;background:#e76f51;border-radius:6px"></div>
<span class="t" style="top:742.21px;font-size:21.66px;line-height:28.16px;color:#6c7185;left:445.2px;transform:translateX(-50%);letter-spacing:-0.155px;margin-left:-0.08px;">East</span>
<div style="left:504.2px;top:480.7px;width:78px;height:254.5px;background:#e76f51;border-radius:6px"></div>
<span class="t" style="top:742.21px;font-size:21.66px;line-height:28.16px;color:#6c7185;left:543.2px;transform:translateX(-50%);letter-spacing:0.475px;margin-left:0.24px;">West</span>
<div style="left:81.2px;top:832.7px;width:230.5px;height:42.5px;background:#fdfdfe;border:1.500px solid #e6e8ef;border-radius:21px"></div>
<div style="left:103.7px;top:847.4px;width:13px;height:13px;background:#e76f51;border-radius:50%"></div>
<span class="t" style="top:840.2px;font-size:21.21px;line-height:27.57px;color:#6c7185;left:130.03px;letter-spacing:0.194px;">Net Revenue (£)</span>
<div style="left:672.7px;top:157.5px;width:597.2px;height:747.5px;background:#fcfcfd;border:1.500px solid #eaecf2;border-radius:32px"></div>
<span class="t" style="top:188.22px;font-size:25.25px;line-height:32.83px;color:#0d0f14;-webkit-text-stroke:0.4px #0d0f14;left:699.31px;letter-spacing:0.199px;">Revenue by Salesperson</span>
<div style="left:1044.2px;top:187.7px;width:71px;height:36.5px;background:#fdfdfe;border:1.500px solid #e3e6ee;border-radius:13px;box-shadow:0 1px 2px rgba(15,23,42,.04)"></div>
<span class="t" style="top:192.22px;font-size:20.36px;line-height:26.47px;color:#0d0f14;font-weight:700;left:1061.58px;letter-spacing:0.392px;">Bar</span>
<div style="left:1129.7px;top:187.7px;width:111.0px;height:36.5px;background:#fdfdfe;border:1.500px solid #e3e6ee;border-radius:13px;box-shadow:0 1px 2px rgba(15,23,42,.04)"></div>
<span class="t" style="top:192.22px;font-size:20.36px;line-height:26.47px;color:#0d0f14;font-weight:700;left:1146.58px;letter-spacing:0.055px;">1 series</span>
<span class="t" style="top:228.22px;font-size:21.21px;line-height:27.57px;color:#6c7185;left:699.53px;letter-spacing:0.182px;">Source: Sales Data</span>
<span class="t" style="top:270.21px;font-size:21.21px;line-height:27.57px;color:#6c7185;left:699.53px;letter-spacing:0.161px;">Salesperson · Revenue (£)</span>
<div style="left:700.7px;top:326.2px;width:540px;height:484px;background:#fefefe;border:1.500px solid #e6e8ef;border-radius:30px"></div>
<div style="left:820.2px;top:354.45px;width:392px;height:1.5px;background:#f0f1f6"></div>
<div style="left:820.2px;top:449.45px;width:392px;height:1.5px;background:#f0f1f6"></div>
<div style="left:820.2px;top:544.45px;width:392px;height:1.5px;background:#f0f1f6"></div>
<div style="left:820.2px;top:639.45px;width:392px;height:1.5px;background:#f0f1f6"></div>
<div style="left:820.2px;top:734.45px;width:392px;height:1.5px;background:#f0f1f6"></div>
<span class="t" style="top:349.21px;font-size:20.8px;line-height:27.04px;color:#6c7185;left:809.0px;transform:translateX(-100%);letter-spacing:1.276px;margin-left:1.276px;">120000</span>
<span class="t" style="top:437.21px;font-size:20.8px;line-height:27.04px;color:#6c7185;left:809.0px;transform:translateX(-100%);letter-spacing:2.111px;margin-left:2.111px;">90000</span>
<span class="t" style="top:532.21px;font-size:20.8px;line-height:27.04px;color:#6c7185;left:809.0px;transform:translateX(-100%);letter-spacing:2.111px;margin-left:2.111px;">60000</span>
<span class="t" style="top:627.21px;font-size:20.8px;line-height:27.04px;color:#6c7185;left:809.0px;transform:translateX(-100%);letter-spacing:2.111px;margin-left:2.111px;">30000</span>
<span class="t" style="top:722.21px;font-size:20.8px;line-height:27.04px;color:#6c7185;left:809.0px;transform:translateX(-100%);">0</span>
<div style="left:828.2px;top:360.2px;width:61px;height:375px;background:#e76f51;border-radius:6px"></div>
<div style="left:906.2px;top:401.2px;width:61px;height:334px;background:#e76f51;border-radius:6px"></div>
<div style="left:984.7px;top:424.2px;width:61.0px;height:311px;background:#e76f51;border-radius:6px"></div>
<div style="left:1063.2px;top:458.2px;width:61px;height:277px;background:#e76f51;border-radius:6px"></div>
<div style="left:1141.7px;top:561.2px;width:61.0px;height:174px;background:#e76f51;border-radius:6px"></div>
<span class="t" style="top:742.21px;font-size:21.66px;line-height:28.16px;color:#6c7185;left:882.01px;letter-spacing:0.071px;">Emily Chen</span>
<span class="t" style="top:742.21px;font-size:21.66px;line-height:28.16px;color:#6c7185;left:1088.51px;letter-spacing:0.126px;">Michael Ross</span>
<div style="left:700.7px;top:832.7px;width:230.5px;height:42.5px;background:#fdfdfe;border:1.500px solid #e6e8ef;border-radius:21px"></div>
<div style="left:723.2px;top:847.4px;width:13px;height:13px;background:#e76f51;border-radius:50%"></div>
<span class="t" style="top:840.2px;font-size:21.21px;line-height:27.57px;color:#6c7185;left:749.53px;letter-spacing:0.194px;">Net Revenue (£)</span>
<div style="left:52.2px;top:926.2px;width:598px;height:700px;background:#fcfcfd;border:1.500px solid #eaecf2;border-radius:32px"></div>
<span class="t" style="top:956.21px;font-size:25.25px;line-height:32.83px;color:#0d0f14;-webkit-text-stroke:0.4px #0d0f14;left:79.81px;letter-spacing:0.283px;">Revenue by Category</span>
<div style="left:427.7px;top:955.7px;width:66.5px;height:36.5px;background:#fdfdfe;border:1.500px solid #e3e6ee;border-radius:13px;box-shadow:0 1px 2px rgba(15,23,42,.04)"></div>
<span class="t" style="top:960.21px;font-size:20.36px;line-height:26.47px;color:#0d0f14;font-weight:700;left:444.58px;letter-spacing:0.834px;">Pie</span>
<div style="left:510.2px;top:955.7px;width:111.5px;height:36.5px;background:#fdfdfe;border:1.500px solid #e3e6ee;border-radius:13px;box-shadow:0 1px 2px rgba(15,23,42,.04)"></div>
<span class="t" style="top:960.21px;font-size:20.36px;line-height:26.47px;color:#0d0f14;font-weight:700;left:527.08px;letter-spacing:0.055px;">1 series</span>
<span class="t" style="top:995.22px;font-size:21.21px;line-height:27.57px;color:#6c7185;left:80.03px;letter-spacing:0.182px;">Source: Sales Data</span>
<div style="left:81.2px;top:1052.2px;width:540.5px;height:500px;background:#fefefe;border:1.500px solid #e6e8ef;border-radius:30px"></div>
<svg class="i" style="left:0;top:0" width="1326.2" height="1305.7"><circle cx="351.20000000000005" cy="1294.2" r="132" fill="#e76f51"/><path d="M351.20000000000005 1294.2 L246.48 1374.56 A132 132 0 0 0 483.20000000000005 1294.2 Z" fill="#2a9d8f"/></svg>
<div style="left:672.7px;top:926.2px;width:597.2px;height:700px;background:#fcfcfd;border:1.500px solid #eaecf2;border-radius:32px"></div>
<span class="t" style="top:956.21px;font-size:25.25px;line-height:32.83px;color:#0d0f14;-webkit-text-stroke:0.4px #0d0f14;left:699.81px;letter-spacing:0.337px;">Monthly Revenue Trend</span>
<div style="left:1036.7px;top:955.7px;width:78.0px;height:36.5px;background:#fdfdfe;border:1.500px solid #e3e6ee;border-radius:13px;box-shadow:0 1px 2px rgba(15,23,42,.04)"></div>
<span class="t" style="top:960.21px;font-size:20.36px;line-height:26.47px;color:#0d0f14;font-weight:700;left:1053.08px;letter-spacing:0.623px;">Line</span>
<div style="left:1129.7px;top:955.7px;width:111.5px;height:36.5px;background:#fdfdfe;border:1.500px solid #e3e6ee;border-radius:13px;box-shadow:0 1px 2px rgba(15,23,42,.04)"></div>
<span class="t" style="top:960.21px;font-size:20.36px;line-height:26.47px;color:#0d0f14;font-weight:700;left:1146.58px;letter-spacing:0.055px;">1 series</span>
<span class="t" style="top:995.22px;font-size:21.21px;line-height:27.57px;color:#6c7185;left:700.03px;letter-spacing:0.182px;">Source: Sales Data</span>
<span class="t" style="top:1037.21px;font-size:21.21px;line-height:27.57px;color:#6c7185;left:700.03px;letter-spacing:0.212px;">Month · Revenue (£)</span>
<div style="left:701.2px;top:1094.2px;width:540px;height:500px;background:#fefefe;border:1.500px solid #e6e8ef;border-radius:30px"></div>
<div style="left:820.2px;top:1122.45px;width:392px;height:1.5px;background:#f0f1f6"></div>
<div style="left:820.2px;top:1216.95px;width:392px;height:1.5px;background:#f0f1f6"></div>
<span class="t" style="top:1117.21px;font-size:20.8px;line-height:27.04px;color:#6c7185;left:809.0px;transform:translateX(-100%);letter-spacing:2.111px;margin-left:2.111px;">60000</span>
<span class="t" style="top:1205.21px;font-size:20.8px;line-height:27.04px;color:#6c7185;left:809.0px;transform:translateX(-100%);letter-spacing:2.111px;margin-left:2.111px;">45000</span>
<span class="t" style="top:1299.21px;font-size:20.8px;line-height:27.04px;color:#6c7185;left:809.0px;transform:translateX(-100%);letter-spacing:2.111px;margin-left:2.111px;">30000</span>
<svg class="i" style="left:0;top:0" width="1326.2" height="1305.7"><path d="M820.2 1305.2 C832.0 1297.6 843.9 1289.9 855.7 1282.7 C867.5 1275.5 879.4 1269.8 891.2 1261.7 C903.0 1253.6 914.9 1233.2 926.7 1233.2 C938.5 1233.2 950.4 1253.2 962.2 1253.2 C974.0 1253.2 985.9 1247.3 997.7 1242.7 C1009.7 1238.1 1021.7 1222.7 1033.7 1222.7 C1045.5 1222.7 1057.4 1258.2 1069.2 1258.2 C1081.0 1258.2 1092.9 1211.2 1104.7 1211.2 C1116.5 1211.2 1128.4 1219.8 1140.2 1225.7 C1152.0 1231.6 1163.9 1248.7 1175.7 1248.7 C1187.7 1248.7 1199.7 1225.5 1211.7 1202.2" fill="none" stroke="#e76f51" stroke-width="3.200" stroke-linecap="round"/><circle cx="820.2" cy="1305.2" r="5" fill="#fff" stroke="#e76f51" stroke-width="2.800"/><circle cx="855.7" cy="1282.7" r="5" fill="#fff" stroke="#e76f51" stroke-width="2.800"/><circle cx="891.2" cy="1261.7" r="5" fill="#fff" stroke="#e76f51" stroke-width="2.800"/><circle cx="926.7" cy="1233.2" r="5" fill="#fff" stroke="#e76f51" stroke-width="2.800"/><circle cx="962.2" cy="1253.2" r="5" fill="#fff" stroke="#e76f51" stroke-width="2.800"/><circle cx="997.7" cy="1242.7" r="5" fill="#fff" stroke="#e76f51" stroke-width="2.800"/><circle cx="1033.7" cy="1222.7" r="5" fill="#fff" stroke="#e76f51" stroke-width="2.800"/><circle cx="1069.2" cy="1258.2" r="5" fill="#fff" stroke="#e76f51" stroke-width="2.800"/><circle cx="1104.7" cy="1211.2" r="5" fill="#fff" stroke="#e76f51" stroke-width="2.800"/><circle cx="1140.2" cy="1225.7" r="5" fill="#fff" stroke="#e76f51" stroke-width="2.800"/><circle cx="1175.7" cy="1248.7" r="5" fill="#fff" stroke="#e76f51" stroke-width="2.800"/><circle cx="1211.7" cy="1202.2" r="5" fill="#fff" stroke="#e76f51" stroke-width="2.800"/></svg>
</div>
</body></html>
